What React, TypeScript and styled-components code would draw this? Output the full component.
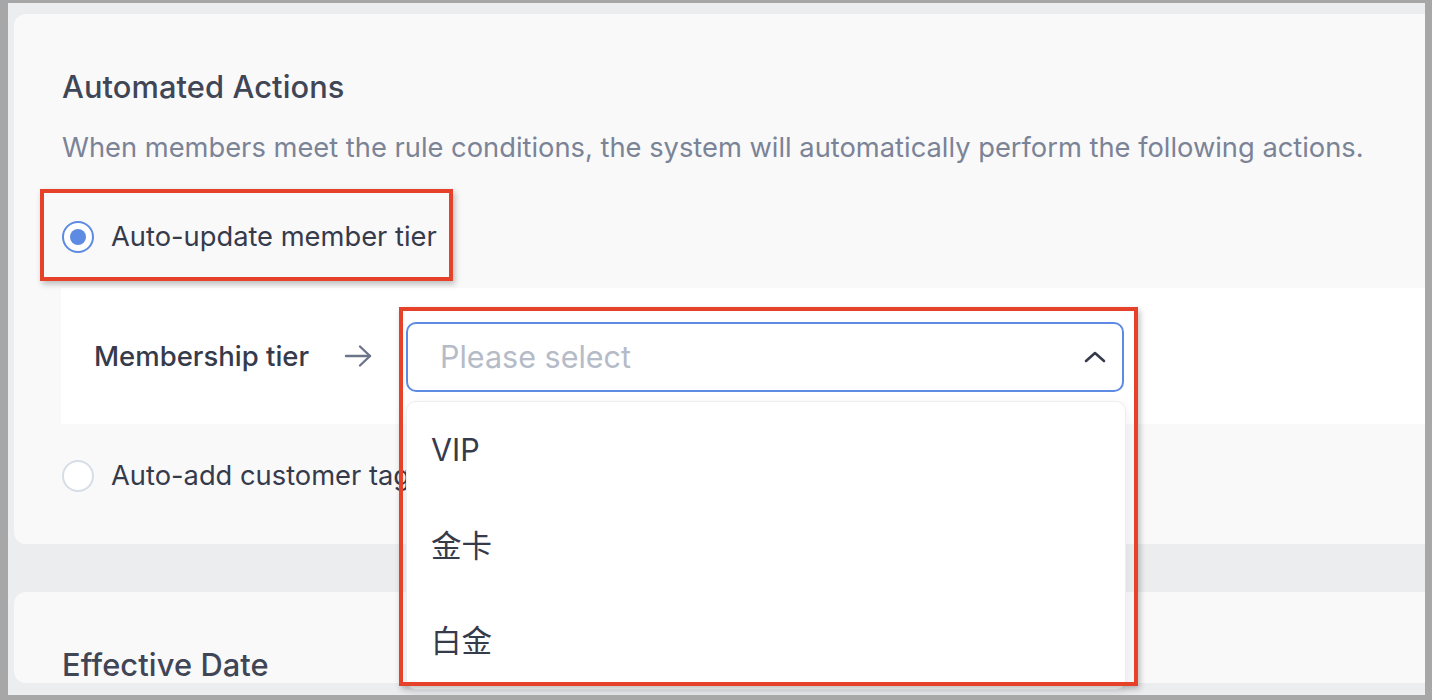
import React from "react";
import styled, { createGlobalStyle } from "styled-components";

const Global = createGlobalStyle`
  html, body { margin: 0; padding: 0; }
  body {
    background: #a7a7a8;
    font-family: Inter, "Noto Sans", "Noto Sans CJK SC", sans-serif;
    -webkit-font-smoothing: antialiased;
  }
`;

const Frame = styled.div`
  width: 1432px;
  height: 700px;
  box-sizing: border-box;
  padding: 3px 7px 5px 8px;
`;

const Viewport = styled.div`
  height: 692px;
  background: #ecedef;
  overflow: hidden;
  padding: 11px 0 0 6px;
  box-sizing: border-box;
  display: flex;
  flex-direction: column;
  gap: 48px;
`;

const Card = styled.section`
  width: 1440px;
  flex-shrink: 0;
  background: #f9f9fa;
  border-radius: 12px;
  padding: 0 0 0 48px;
  box-sizing: border-box;
  height: ${(p: { $h?: number }) => (p.$h ? `${p.$h}px` : "auto")};
`;

const Title = styled.h2`
  margin: 0;
  padding-top: ${(p: { $top: number }) => p.$top}px;
  font-size: 30.8px;
  line-height: 36px;
  font-weight: 550;
  color: #404656;
  letter-spacing: 0.1px;
`;

const Desc = styled.p`
  margin: 27px 0 0;
  font-size: 27.3px;
  line-height: 32px;
  color: #7b8396;
  font-weight: 400;
  white-space: nowrap;
`;

const RadioRow = styled.label`
  position: relative;
  display: inline-flex;
  align-items: center;
  gap: 17px;
  margin-top: ${(p: { $mt: number }) => p.$mt}px;
  font-size: 27.3px;
  line-height: 36px;
  color: #363b4c;
  white-space: nowrap;
`;

const RadioCircle = styled.span<{ $checked?: boolean }>`
  width: 32px;
  height: 32px;
  flex-shrink: 0;
  box-sizing: border-box;
  border-radius: 50%;
  border: 2px solid ${(p) => (p.$checked ? "#5d8ae2" : "#d6dde7")};
  background: #ffffff;
  display: flex;
  align-items: center;
  justify-content: center;
  &::after {
    content: "";
    display: ${(p) => (p.$checked ? "block" : "none")};
    width: 16px;
    height: 16px;
    border-radius: 50%;
    background: #5d8ae2;
  }
`;

const Annotation = styled.div`
  position: absolute;
  border: 4px solid #e6422a;
  box-shadow: 2px 3px 6px rgba(0, 0, 0, 0.25);
  pointer-events: none;
  z-index: 5;
`;

const Stack = styled.div`
  display: flex;
  flex-direction: column;
  align-items: flex-start;
`;

const SubPanel = styled.div`
  margin-top: 33px;
  margin-left: -1px;
  width: 1400px;
  height: 136px;
  background: #ffffff;
  display: flex;
  align-items: center;
  padding-left: 33px;
  box-sizing: border-box;
`;

const FieldLabel = styled.span`
  font-size: 27.5px;
  font-weight: 500;
  color: #363b4c;
  width: 250px;
  white-space: nowrap;
`;

const Arrow = styled.span`
  display: flex;
  width: 62px;
  color: #6c7488;
`;

const SelectWrap = styled.div`
  position: relative;
  width: 718px;
  margin-top: 1px;
`;

const SelectBox = styled.div`
  height: 70px;
  box-sizing: border-box;
  border: 2px solid #5d8ae2;
  border-radius: 10px;
  display: flex;
  align-items: center;
  justify-content: space-between;
  padding: 0 15px 0 32px;
  background: #ffffff;
`;

const Placeholder = styled.span`
  font-size: 30.5px;
  color: #b5bbc7;
`;

const Dropdown = styled.ul`
  position: absolute;
  top: 79px;
  left: 0;
  width: 720px;
  margin: 0;
  padding: 0 0 2px;
  list-style: none;
  background: #ffffff;
  border: 1px solid #eeeef0;
  border-radius: 10px;
  box-shadow: 0 4px 14px rgba(20, 30, 50, 0.08);
  box-sizing: border-box;
  z-index: 3;
`;

const Option = styled.li`
  height: 95px;
  display: flex;
  align-items: center;
  padding-left: 24px;
  font-size: 30.5px;
  color: #363b4c;
  font-family: Inter, "Noto Sans CJK SC", sans-serif;
`;

export default function App() {
  return (
    <>
      <Global />
      <Frame>
        <Viewport>
          <Card $h={530}>
            <Title $top={55}>Automated Actions</Title>
            <Desc>
              When members meet the rule conditions, the system will automatically perform the following actions.
            </Desc>
            <Stack>
              <RadioRow $mt={55}>
                <RadioCircle $checked />
                Auto-update member tier
                <Annotation style={{ top: -30, left: -22, right: -16, bottom: -26 }} />
              </RadioRow>
              <SubPanel>
                <FieldLabel>Membership tier</FieldLabel>
                <Arrow>
                  <svg width="28" height="24" viewBox="0 0 28 24" fill="none" stroke="currentColor" strokeWidth="2.4" strokeLinecap="round" strokeLinejoin="round">
                    <path d="M2 12h24" />
                    <path d="M16 2.5l10 9.5-10 9.5" />
                  </svg>
                </Arrow>
                <SelectWrap>
                  <SelectBox>
                    <Placeholder>Please select</Placeholder>
                    <svg width="24" height="24" viewBox="0 0 24 24" fill="none" stroke="#363b4c" strokeWidth="2.6" strokeLinecap="round" strokeLinejoin="round">
                      <path d="M3 16l9-8 9 8" />
                    </svg>
                  </SelectBox>
                  <Dropdown>
                    <Option>VIP</Option>
                    <Option>金卡</Option>
                    <Option>白金</Option>
                  </Dropdown>
                  <Annotation style={{ top: -15, left: -7, width: 731, height: 371 }} />
                </SelectWrap>
              </SubPanel>
              <RadioRow $mt={34}>
                <RadioCircle />
                Auto-add customer tag
              </RadioRow>
            </Stack>
          </Card>
          <Card>
            <Title $top={55}>Effective Date</Title>
          </Card>
        </Viewport>
      </Frame>
    </>
  );
}
